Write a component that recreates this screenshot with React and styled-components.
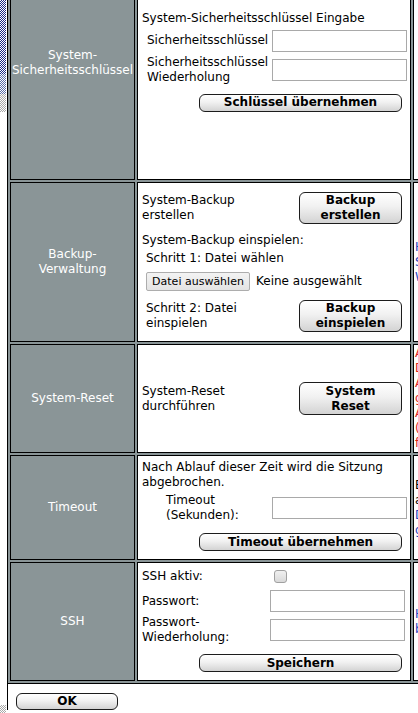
import React from 'react';
import styled, { createGlobalStyle } from 'styled-components';

const GlobalStyle = createGlobalStyle`
  html, body {
    margin: 0;
    padding: 0;
    background: #ffffff;
    overflow: hidden;
  }
  body {
    font-family: "DejaVu Sans", Verdana, sans-serif;
    font-size: 12px;
    line-height: 15px;
    color: #000000;
  }
`;

const Screen = styled.div`
  display: flex;
  align-items: flex-start;
  height: 713px;
  overflow: hidden;
`;

const Backdrop = styled.div`
  flex: 0 0 6px;
  height: 713px;
  display: flex;
  flex-direction: column;
  margin-right: 1px;
`;

const Dither = styled.div`
  height: ${p => p.$h}px;
  background: repeating-conic-gradient(${p => p.$c} 0 25%, #ffffff 0 50%) 0 0 / 2px 2px;
`;

const Blank = styled.div`
  flex: 1;
  background: #ffffff;
`;

const Settings = styled.div`
  flex: 0 0 auto;
  width: 760px;
  margin-top: -56px;
  border-left: 1px solid #000000;
  background: #ffffff;
`;

const Table = styled.div`
  display: grid;
  grid-template-columns: 125px 274px 330px;
  grid-template-rows: 234px 160px 109px 105px 119px;
  gap: 2px;
  padding: 2px;
  background: #8a9597;
  border-bottom: 1px solid #000000;
`;

const Cell = styled.div`
  box-sizing: border-box;
  border: 1px solid #000000;
  display: flex;
  flex-direction: column;
  justify-content: center;
`;

const LabelCell = styled(Cell)`
  background: #8a9597;
  color: #ffffff;
  align-items: center;
  text-align: center;
  padding: 0;
`;

const ContentCell = styled(Cell)`
  background: #ffffff;
  padding: 0 3px ${p => p.$pb || 0}px 4px;
`;

const HelpCell = styled(Cell)`
  background: #ffffff;
  padding-left: 1px;
  white-space: nowrap;
`;

const HelpLine = styled.div`
  color: ${p => p.$color || '#000000'};
`;

const Line = styled.div`
  padding-left: ${p => p.$indent || 0}px;
  margin-top: ${p => p.$mt || 0}px;
  white-space: nowrap;
`;

const FormGrid = styled.div`
  display: grid;
  grid-template-columns: ${p => p.$label}px 135px;
  grid-auto-rows: auto;
  row-gap: ${p => p.$gap || 2}px;
  margin-top: ${p => p.$mt || 0}px;
  align-items: center;
`;

const FieldLabel = styled.div`
  padding-left: ${p => p.$indent || 0}px;
  min-height: ${p => p.$h || 0}px;
  display: flex;
  align-items: center;
`;

const TextInput = styled.input`
  box-sizing: border-box;
  width: 135px;
  height: 22px;
  margin: 0;
  padding: 0 2px;
  border: 1px solid #a9a9a9;
  background: #ffffff;
  font: inherit;
`;

const Checkbox = styled.input.attrs({ type: 'checkbox' })`
  appearance: none;
  box-sizing: border-box;
  width: 13px;
  height: 13px;
  margin: 0 0 0 4px;
  border: 1px solid #a0a0a0;
  border-radius: 3px;
  background: linear-gradient(#f0f0f0, #d9d9d9);
`;

const ActionRow = styled.div`
  display: flex;
  justify-content: ${p => p.$justify || 'flex-end'};
  align-items: center;
  padding-right: 5px;
  margin-top: ${p => p.$mt || 0}px;
  min-height: ${p => p.$h || 0}px;
  white-space: nowrap;
`;

const Button = styled.button`
  box-sizing: border-box;
  width: ${p => p.$w}px;
  height: ${p => p.$h || 18}px;
  padding: 0;
  border: 1px solid #1c1c1c;
  border-radius: 6px;
  background: linear-gradient(#ffffff 0%, #f1f1f1 45%, #d3d3d3 100%);
  color: #000000;
  font-family: "DejaVu Sans", Verdana, sans-serif;
  font-size: 12px;
  font-weight: bold;
  line-height: 15px;
  text-align: center;
`;

const FileRow = styled.div`
  display: flex;
  align-items: center;
  gap: 6px;
  padding-left: 4px;
  margin-top: ${p => p.$mt || 0}px;
  height: 20px;
  white-space: nowrap;
`;

const FileButton = styled.button`
  box-sizing: border-box;
  width: 104px;
  height: 19px;
  padding: 0;
  border: 1px solid #adadad;
  border-radius: 2px;
  background: linear-gradient(#f3f3f3, #e3e3e3);
  color: #000000;
  font-family: "DejaVu Sans", Verdana, sans-serif;
  font-size: 11px;
  line-height: 15px;
`;

const Footer = styled.div`
  padding: 9px 0 0 8px;
`;

const help = {
  backup: [
    ['Hier kann ein Backup der Konfiguration', '#1f3fbf'],
    ['Sicherung erstellt oder eingespielt werden.', '#1f3fbf'],
    ['Wiederherstellung aus einer Datei.', '#1f3fbf'],
  ],
  reset: [
    ['Achtung: Alle Einstellungen werden', '#e2231a'],
    ['Daten gehen dabei verloren.', '#e2231a'],
    ['Alle Schlüssel werden ebenfalls', '#e2231a'],
    ['gelöscht und das System startet neu.', '#e2231a'],
    ['Anschließend gelten wieder die', '#e2231a'],
    ['(Werks-)Einstellungen', '#e2231a'],
    ['für alle Module.', '#e2231a'],
  ],
  timeout: [
    ['Bei Inaktivität wird die Sitzung', '#000000'],
    ['automatisch beendet.', '#000000'],
    ['Der Wert wird in Sekunden', '#1f3fbf'],
    ['gespeichert.', '#1f3fbf'],
  ],
  ssh: [
    ['Hier kann der SSH-Zugang', '#1f3fbf'],
    ['bearbeitet werden.', '#1f3fbf'],
  ],
};

const Help = ({ lines }) => (
  <HelpCell>
    {lines.map(([text, color]) => (
      <HelpLine key={text} $color={color}>{text}</HelpLine>
    ))}
  </HelpCell>
);

export default function App() {
  return (
    <>
      <GlobalStyle />
      <Screen>
        <Backdrop>
          <Dither $h={74} $c="#1a2a86" />
          <Dither $h={20} $c="#5a6ea8" />
          <Dither $h={18} $c="#a8a8a8" />
          <Blank />
          <Dither $h={8} $c="#a8a8a8" />
        </Backdrop>
        <Settings>
          <Table>
            <LabelCell>System-<br />Sicherheitsschlüssel</LabelCell>
            <ContentCell $pb={4}>
              <Line>System-Sicherheitsschlüssel Eingabe</Line>
              <FormGrid $label={130} $gap={2} $mt={3}>
                <FieldLabel $indent={5} $h={24}>Sicherheitsschlüssel</FieldLabel>
                <TextInput type="password" />
                <FieldLabel $indent={5} $h={30}>Sicherheitsschlüssel<br />Wiederholung</FieldLabel>
                <TextInput type="password" />
              </FormGrid>
              <ActionRow $mt={9}>
                <Button $w={203}>Schlüssel übernehmen</Button>
              </ActionRow>
            </ContentCell>
            <HelpCell />

            <LabelCell>Backup-<br />Verwaltung</LabelCell>
            <ContentCell>
              <ActionRow $justify="space-between" $h={32}>
                <span>System-Backup<br />erstellen</span>
                <Button $w={103} $h={32}>Backup<br />erstellen</Button>
              </ActionRow>
              <Line $mt={9}>System-Backup einspielen:</Line>
              <Line $mt={3} $indent={4}>Schritt 1: Datei wählen</Line>
              <FileRow $mt={5}>
                <FileButton>Datei auswählen</FileButton>
                <span>Keine ausgewählt</span>
              </FileRow>
              <ActionRow $justify="space-between" $h={32} $mt={9}>
                <Line $indent={4}>Schritt 2: Datei<br />einspielen</Line>
                <Button $w={103} $h={32}>Backup<br />einspielen</Button>
              </ActionRow>
            </ContentCell>
            <Help lines={help.backup} />

            <LabelCell>System-Reset</LabelCell>
            <ContentCell>
              <ActionRow $justify="space-between" $h={33}>
                <span>System-Reset<br />durchführen</span>
                <Button $w={103} $h={33}>System<br />Reset</Button>
              </ActionRow>
            </ContentCell>
            <Help lines={help.reset} />

            <LabelCell>Timeout</LabelCell>
            <ContentCell $pb={4}>
              <Line>Nach Ablauf dieser Zeit wird die Sitzung<br />abgebrochen.</Line>
              <FormGrid $label={130} $mt={3}>
                <FieldLabel $indent={24} $h={30}>Timeout<br />(Sekunden):</FieldLabel>
                <TextInput type="text" />
              </FormGrid>
              <ActionRow $mt={10}>
                <Button $w={203}>Timeout übernehmen</Button>
              </ActionRow>
            </ContentCell>
            <Help lines={help.timeout} />

            <LabelCell>SSH</LabelCell>
            <ContentCell $pb={3}>
              <FormGrid $label={128} $gap={5}>
                <FieldLabel $h={16}>SSH aktiv:</FieldLabel>
                <Checkbox />
                <FieldLabel $h={24}>Passwort:</FieldLabel>
                <TextInput type="password" />
              </FormGrid>
              <FormGrid $label={128} $mt={2}>
                <FieldLabel $h={30}>Passwort-<br />Wiederholung:</FieldLabel>
                <TextInput type="password" />
              </FormGrid>
              <ActionRow $mt={9}>
                <Button $w={203}>Speichern</Button>
              </ActionRow>
            </ContentCell>
            <Help lines={help.ssh} />
          </Table>
          <Footer>
            <Button $w={102} $h={17}>OK</Button>
          </Footer>
        </Settings>
      </Screen>
    </>
  );
}
